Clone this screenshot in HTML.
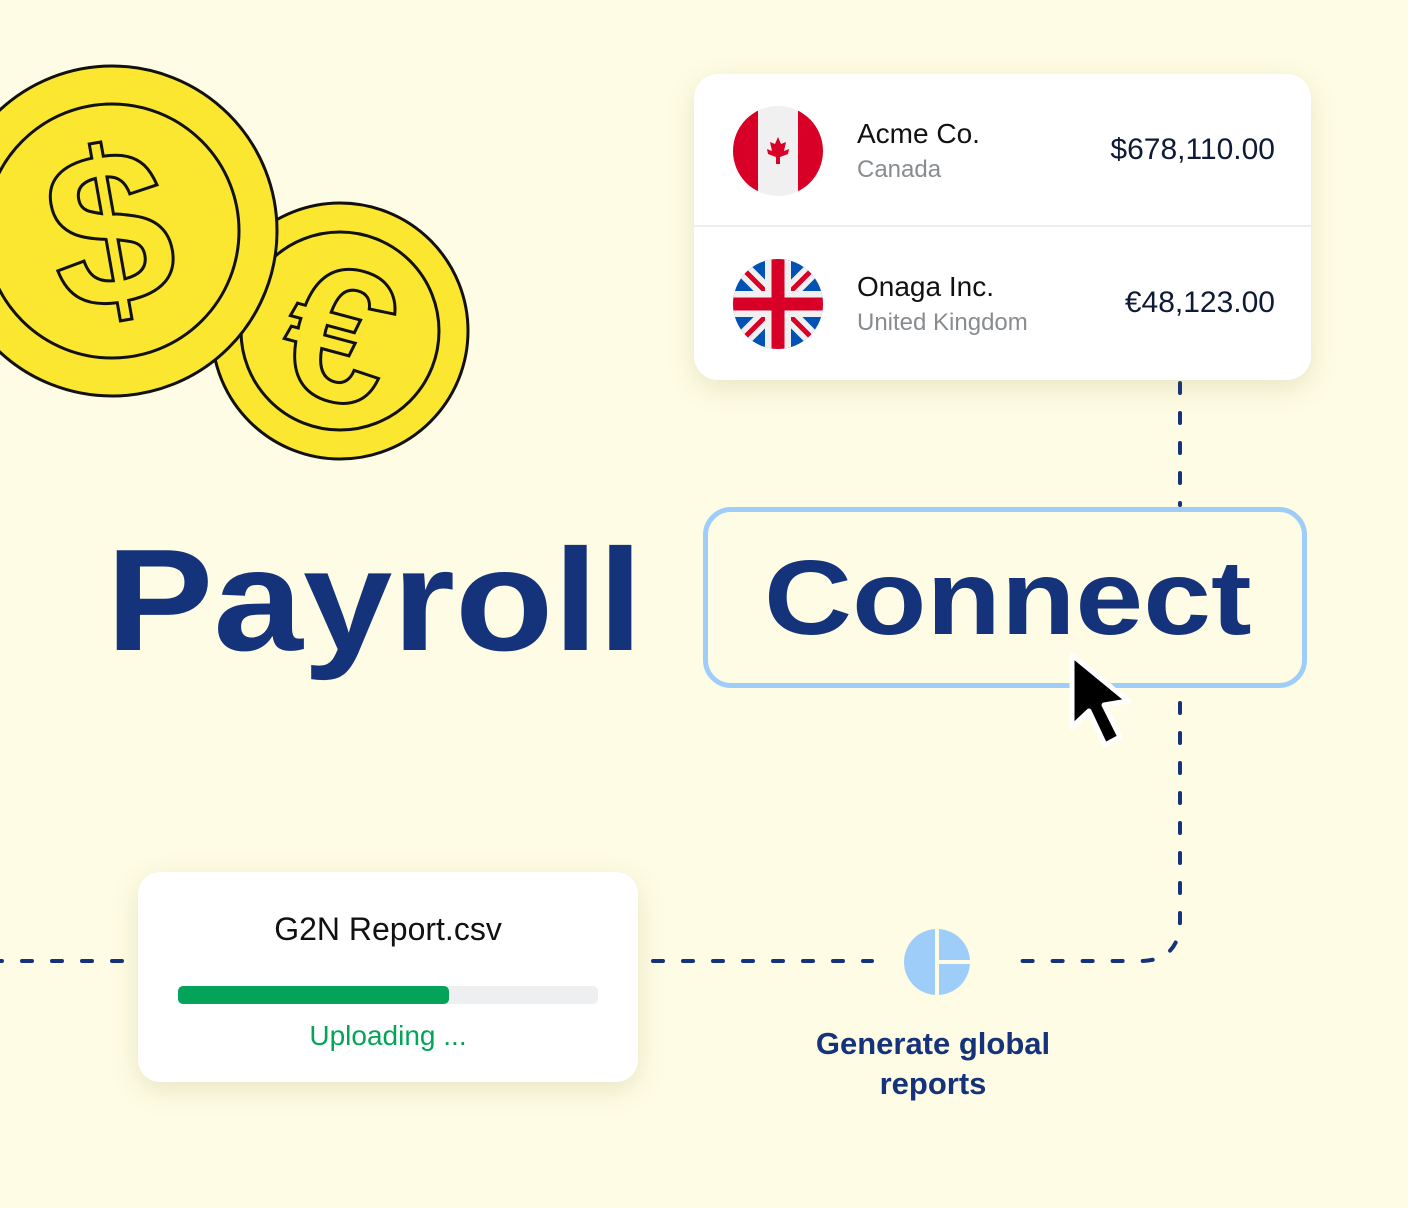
<!DOCTYPE html>
<html><head><meta charset="utf-8"><style>
body{margin:0;width:1408px;height:1208px;background:#fefce4;position:relative;overflow:hidden;font-family:"Liberation Sans",sans-serif}
.abs{position:absolute}
.card{position:absolute;background:#fff;box-shadow:0 8px 28px rgba(120,110,40,.16)}
</style></head><body>
<svg class="abs" style="left:0;top:0" width="1408" height="1208">
 <g fill="none" stroke="#15337a" stroke-width="4" stroke-linecap="round" stroke-dasharray="10 20">
  <path d="M1180 383 V505"/>
  <path d="M1180 703 V920 Q1180 961 1140 961 H1005"/>
  <path d="M653 961 H872"/>
  <path d="M-8 961 H125"/>
 </g>
 <circle cx="340" cy="331" r="128" fill="#fbe630" stroke="#111" stroke-width="3"/>
 <circle cx="340" cy="331" r="99" fill="none" stroke="#111" stroke-width="3"/>
 <text x="340" y="400" transform="rotate(15 340 331)" text-anchor="middle" font-family="Liberation Sans" font-weight="bold" font-size="190" fill="#fbe630" stroke="#111" stroke-width="3">€</text>
 <circle cx="112" cy="231" r="165" fill="#fbe630" stroke="#111" stroke-width="3"/>
 <circle cx="112" cy="231" r="127" fill="none" stroke="#111" stroke-width="3"/>
 <text x="110" y="305" transform="rotate(-10 110 231)" text-anchor="middle" font-family="Liberation Sans" font-weight="bold" font-size="220" fill="#fbe630" stroke="#111" stroke-width="3">$</text>
 <circle cx="937" cy="962" r="33" fill="#9ecdf9"/>
 <path d="M937 926 V1000 M937 962 H975" stroke="#fefce4" stroke-width="4"/>
</svg>

<div class="abs" style="left:106px;top:517px;font-size:145px;font-weight:bold;color:#15337a;transform:scaleX(1.11);transform-origin:0 0">Payroll</div>
<div class="abs" style="left:703px;top:507px;width:594px;height:171px;border:5px solid #9ecdf9;border-radius:28px"></div>
<div class="abs" style="left:764px;top:538px;font-size:106px;font-weight:bold;color:#15337a;transform:scaleX(1.15);transform-origin:0 0">Connect</div>

<svg class="abs" style="left:1060px;top:645px" width="90" height="115">
 <path d="M12 10 L12 82 L29 66 L45 100 L60 92 L44 60 L68 56 Z" fill="#000" stroke="#fff" stroke-width="5" stroke-linejoin="round"/>
</svg>

<div class="card" style="left:694px;top:74px;width:617px;height:306px;border-radius:24px">
 <div class="abs" style="left:0;top:151px;width:617px;height:2px;background:#eceef4"></div>
 <svg class="abs" style="left:38px;top:31px" width="92" height="92">
  <defs><clipPath id="c1"><circle cx="46" cy="46" r="45"/></clipPath></defs>
  <g clip-path="url(#c1)">
   <rect width="92" height="92" fill="#f0f0f0"/>
   <rect width="26" height="92" fill="#d80027"/><rect x="66" width="26" height="92" fill="#d80027"/>
   <path d="M46 32 L49 39 L54 37 L52 46 L57 44 L56 49 L48 52 L48 59 L44 59 L44 52 L36 49 L35 44 L40 46 L38 37 L43 39 Z" fill="#d80027"/>
  </g>
 </svg>
 <svg class="abs" style="left:38px;top:184px" width="92" height="92">
  <defs><clipPath id="c2"><circle cx="46" cy="46" r="45"/></clipPath></defs>
  <g clip-path="url(#c2)">
   <rect width="92" height="92" fill="#0052b4"/>
   <path d="M0 0 L92 92 M92 0 L0 92" stroke="#f0f0f0" stroke-width="16"/>
   <path d="M0 0 L46 46 M92 92 L46 46 M92 0 L46 46 M0 92 L46 46" stroke="#d80027" stroke-width="5"/>
   <path d="M46 0 V92 M0 46 H92" stroke="#f0f0f0" stroke-width="26"/>
   <path d="M46 0 V92 M0 46 H92" stroke="#d80027" stroke-width="13"/>
  </g>
 </svg>
 <div class="abs" style="left:163px;top:44px;font-size:28px;color:#111">Acme Co.</div>
 <div class="abs" style="left:163px;top:82px;font-size:24px;color:#888c90">Canada</div>
 <div class="abs" style="right:36px;top:59px;font-size:30px;color:#0f1a36">$678,110.00</div>
 <div class="abs" style="left:163px;top:197px;font-size:28px;color:#111">Onaga Inc.</div>
 <div class="abs" style="left:163px;top:235px;font-size:24px;color:#888c90">United Kingdom</div>
 <div class="abs" style="right:36px;top:212px;font-size:30px;color:#0f1a36">€48,123.00</div>
</div>

<div class="card" style="left:138px;top:872px;width:500px;height:210px;border-radius:22px">
 <div class="abs" style="left:0;width:500px;top:39px;text-align:center;font-size:32px;color:#111">G2N Report.csv</div>
 <div class="abs" style="left:40px;top:114px;width:420px;height:18px;background:#eeeff1;border-radius:5px"></div>
 <div class="abs" style="left:40px;top:114px;width:271px;height:18px;background:#03a45a;border-radius:5px"></div>
 <div class="abs" style="left:0;width:500px;top:148px;text-align:center;font-size:28px;color:#03a45a">Uploading ...</div>
</div>

<div class="abs" style="left:733px;width:400px;top:1024px;text-align:center;font-size:31px;font-weight:bold;color:#15337a;line-height:40px">Generate global<br>reports</div>
</body></html>
